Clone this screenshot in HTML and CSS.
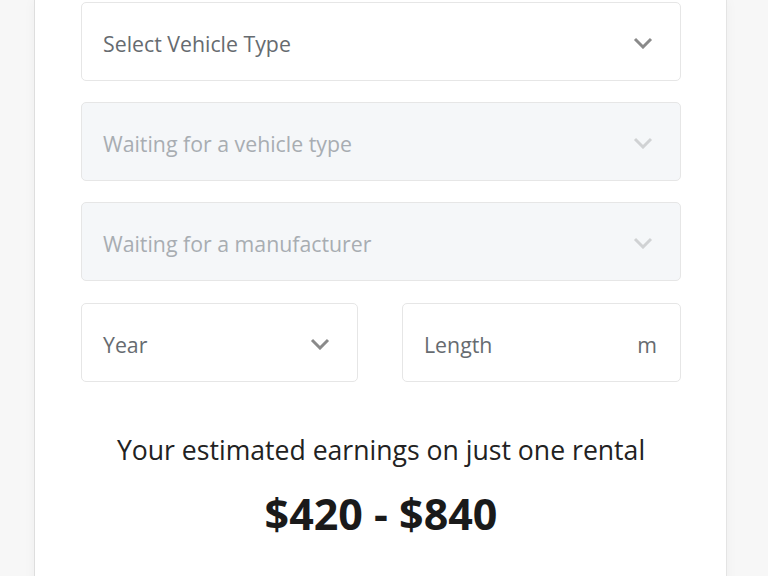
FILE: index.html
```html
<!DOCTYPE html>
<html>
<head>
<meta charset="utf-8">
<link rel="stylesheet" href="styles.css">
</head>
<body>
<div class="page">
  <div class="card">
    <div class="form">
      <div class="field">
        <span class="label">Select Vehicle Type</span>
        <svg class="chev" viewBox="0 0 20 12" width="20" height="12"><path d="M2 2 L10 10 L18 2" fill="none" stroke="currentColor" stroke-width="3"/></svg>
      </div>
      <div class="field disabled">
        <span class="label">Waiting for a vehicle type</span>
        <svg class="chev" viewBox="0 0 20 12" width="20" height="12"><path d="M2 2 L10 10 L18 2" fill="none" stroke="currentColor" stroke-width="3"/></svg>
      </div>
      <div class="field disabled">
        <span class="label">Waiting for a manufacturer</span>
        <svg class="chev" viewBox="0 0 20 12" width="20" height="12"><path d="M2 2 L10 10 L18 2" fill="none" stroke="currentColor" stroke-width="3"/></svg>
      </div>
      <div class="row">
        <div class="field">
          <span class="label">Year</span>
          <svg class="chev" viewBox="0 0 20 12" width="20" height="12"><path d="M2 2 L10 10 L18 2" fill="none" stroke="currentColor" stroke-width="3"/></svg>
        </div>
        <div class="field">
          <span class="label">Length</span>
          <span class="unit">m</span>
        </div>
      </div>
    </div>
    <p class="est">Your estimated earnings on just one rental</p>
    <p class="price">$420 - $840</p>
  </div>
</div>
</body>
</html>
```
FILE: styles.css
```css
html, body {
  margin: 0;
  padding: 0;
  background: #f7f7f7;
  font-family: "Open Sans", "Noto Sans", sans-serif;
}
.page {
  width: 768px;
  height: 576px;
  overflow: hidden;
  display: flex;
  padding-left: 34px;
  box-sizing: border-box;
}
.card {
  width: 693px;
  background: #fff;
  border-left: 1px solid #dedede;
  border-right: 1px solid #e4e4e4;
  box-shadow: 0 0 12px rgba(0,0,0,0.04);
  padding: 2px 45px 0 46px;
  box-sizing: border-box;
  height: 600px;
}
.form {
  display: flex;
  flex-direction: column;
  gap: 21px;
}
.field {
  height: 79px;
  box-sizing: border-box;
  border: 1px solid #e6e6e6;
  border-radius: 5px;
  background: #fff;
  display: flex;
  align-items: center;
  justify-content: space-between;
  padding: 3px 27px 0 21px;
  color: #666b70;
  font-size: 21.3px;
}
.field.disabled {
  background: #f5f7f9;
  color: #a8adb2;
}
.chev { color: #8a8a8a; margin-top: -1px; }
.disabled .chev { color: #d0d2d4; }
.row {
  display: flex;
  gap: 44px;
  margin-top: 1px;
}
.row .field { flex: 1; }
.row .field:first-child { flex: 0 0 277px; }
.unit { margin-right: -4px; }
.est {
  margin: 50px 0 0;
  text-align: center;
  font-size: 26.6px;
  color: #222;
}
.price {
  margin: 16px 0 0;
  text-align: center;
  font-size: 43px;
  font-weight: 700;
  color: #1a1a1a;
}
```
